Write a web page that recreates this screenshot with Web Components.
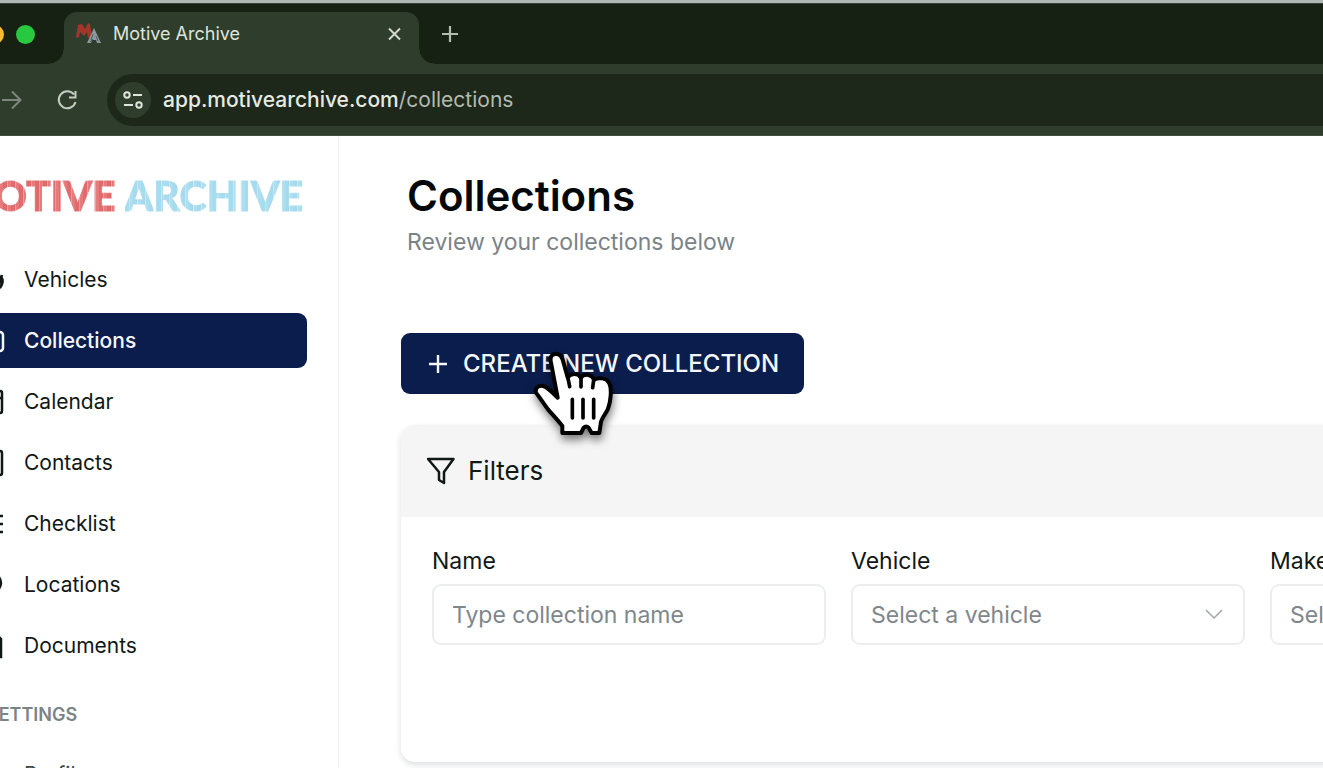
<!DOCTYPE html>
<html lang="en">
<head>
<meta charset="utf-8">
<title>Motive Archive</title>
<style>
html, body { margin: 0; height: 100%; }
body { overflow: hidden; font-family: Inter, "Liberation Sans", sans-serif; background: #fff; color: #101815; }
</style>
</head>
<body>
<motive-app></motive-app>
<script>
const define = (name, html, setup) => {
  const tpl = document.createElement('template');
  tpl.innerHTML = html;
  customElements.define(name, class extends HTMLElement {
    constructor() {
      super();
      this.attachShadow({ mode: 'open' }).append(tpl.content.cloneNode(true));
    }
    connectedCallback() { if (setup) setup(this, this.shadowRoot); }
  });
};

define('browser-chrome', `
<style>
:host { display: block; background: #2f3e2c; border-top: 3px solid #aeb7b2; border-bottom: 1px solid #414d3f; box-sizing: border-box; }
* { box-sizing: border-box; }
button { border: 0; background: none; padding: 0; display: flex; align-items: center; justify-content: center; color: #d3d9d0; }
.strip { display: flex; align-items: flex-end; height: 61px; background: #172113; border-top: 1px solid #3a4238; }
.lights { display: flex; gap: 12px; width: 140px; height: 52px; margin-left: -76px; padding: 13px 0 0 61px; flex: none; }
.lights i { width: 19px; height: 19px; border-radius: 50%; flex: none; background: #28c840; }
.lights i:first-child { background: #febc2e; }
.tab { position: relative; display: flex; align-items: center; width: 355px; height: 52px; padding: 0 14px 8px 12px; border-radius: 13px 13px 0 0; background: #2f3e2c; color: #dfe4dc; font-size: 18px; line-height: 24px; }
.tab::before, .tab::after { content: ""; position: absolute; bottom: 0; width: 15px; height: 15px; }
.tab::before { right: 100%; background: radial-gradient(circle at 0 0, #172113 14px, #2f3e2c 15px); }
.tab::after { left: 100%; background: radial-gradient(circle at 100% 0, #172113 14px, #2f3e2c 15px); }
.tab span { flex: 1; padding-left: 12px; }
.tab .close { width: 22px; height: 22px; }
.plus { width: 24px; height: 24px; margin: 0 0 18px 19px; color: #b4bbb1; }
.bar { display: flex; align-items: center; height: 71px; padding: 1px 0 0; }
.fwd { width: 24px; height: 24px; color: #7e877b; }
.reload { width: 24px; height: 24px; margin: 0 28px 0 31px; color: #c6ccc3; }
.url { flex: 1; display: flex; align-items: center; height: 52px; padding-left: 8px; border-radius: 26px 0 0 26px; background: #1d281a; }
.site { width: 36px; height: 36px; border-radius: 50%; background: #2f3e2c; flex: none; }
a { margin-left: 12px; font-size: 21px; line-height: 28px; color: #b4bab1; text-decoration: none; white-space: nowrap; }
b { font-weight: 500; color: #e6eae4; }
</style>
<div class="strip">
  <div class="lights"><i></i><i></i></div>
  <div class="tab">
    <svg width="25" height="24" viewBox="0 0 25 24" aria-hidden="true"><path d="M0 15 2 3l4-1 3 5 3-6 2 1 2 13-4 1-1-6-3 4-4-4-1 5-2 1z" fill="#a3352b"/><path d="M11 21 18 6l7 15h-4l-1-3h-4l-1 3z" fill="#8e959c"/><path d="m17 12-2 6M20 14l2 5M14 20l3-3" stroke="#4d5c63" fill="none"/></svg>
    <span>Motive Archive</span>
    <button class="close" aria-label="Close tab"><svg width="22" height="22" fill="none" stroke="currentColor" stroke-width="2"><path d="m6 5.500 11 11M17 5.500l-11 11"/></svg></button>
  </div>
  <button class="plus" aria-label="New tab"><svg width="24" height="24" fill="none" stroke="currentColor" stroke-width="2.200"><path d="M12 4v16M4 12h16"/></svg></button>
</div>
<div class="bar">
  <button class="fwd" aria-label="Forward"><svg width="24" height="24" fill="none" stroke="currentColor" stroke-width="2"><path d="M2 12h18M12 3.500l8.500 8.500-8.500 8.500"/></svg></button>
  <button class="reload" aria-label="Reload"><svg width="24" height="24" fill="none" stroke="currentColor" stroke-width="2"><path d="M20.500 14a8.500 8.500 0 1 1-1.500-7.500M20.500 3v6.500H14"/></svg></button>
  <div class="url">
    <button class="site" aria-label="Site information"><svg width="20" height="20" fill="none" stroke="#dfe4dc" stroke-width="2"><circle cx="4" cy="5" r="2.700"/><path d="M10 5h9M1 15h9"/><circle cx="16" cy="15" r="2.700"/></svg></button>
    <a href="#collections"><b>app.motivearchive.com</b>/collections</a>
  </div>
</div>`);

define('brand-logo', `
<style>
:host { display: flex; justify-content: flex-end; gap: 9px; font: 900 41px/48px Lato, sans-serif; }
span { color: transparent; -webkit-background-clip: text; background-clip: text; -webkit-text-stroke: 1px transparent; }
.m { background-image: repeating-linear-gradient(90deg, #e26a6c 0 4px, #ee9a9b 4px 5px, #e67b7d 5px 8px); }
.a { background-image: repeating-linear-gradient(90deg, #a5dbee 0 4px, #c6e8f4 4px 5px, #aedff0 5px 8px); }
</style>
<span class="m">MOTIVE</span><span class="a">ARCHIVE</span>`);

const icons = {
  car: '<path d="M3 12 6 5h10l3 6M2 12h17v8H2zM5 20v3M20 8c4 3 3 8 0 12M22 7l-4 14"/>',
  box: '<rect x="2" y="3" width="21" height="19" rx="3"/><path d="M8 3v19"/>',
  calendar: '<rect x="1" y="1" width="21" height="22" rx="2"/><path d="M1 8h21M7 0v4M17 0v4"/>',
  contact: '<rect x="1" y="0" width="21" height="24" rx="2"/><circle cx="12" cy="10" r="3"/><path d="M6 19h12"/>',
  list: '<path d="M13 4h10M13 12h10M13 20h10M1 4l3 3 5-6M1 16l3 3 5-6"/>',
  pin: '<path d="M21 10c0 6-9 14-9 14S3 16 3 10a9 9 0 0 1 18 0z"/>',
  file: '<path d="M3 3h16l2 2v18H3zM12 3v7h9"/>'
};

define('nav-item', `
<style>
:host { display: block; }
a { display: flex; align-items: center; gap: 20px; height: 55px; padding-left: 28px; border-radius: 9px; color: #101815; font-size: 21px; line-height: 28px; text-decoration: none; }
:host([active]) a { background: #0b1d4d; color: #f5f7fa; font-weight: 500; }
:host([muted]) a { color: #3f4845; }
svg { width: 24px; height: 24px; fill: none; stroke: currentColor; stroke-width: 2.500; flex: none; overflow: visible; }
</style>
<a href="#"><svg aria-hidden="true"></svg><slot></slot></a>`,
(el, root) => {
  root.querySelector('svg').innerHTML = icons[el.getAttribute('icon')] || '';
  if (el.hasAttribute('active')) root.querySelector('a').setAttribute('aria-current', 'page');
});

define('app-sidebar', `
<style>
:host { display: block; box-sizing: border-box; width: 387px; margin-left: -48px; padding: 36px 31px 0 0; border-right: 1px solid #f0f1f2; flex: none; }
brand-logo { margin-right: 4px; }
nav { display: flex; flex-direction: column; gap: 6px; margin-top: 32px; }
h2 { margin: 26px 0 16px 35px; font-size: 18px; line-height: 32px; font-weight: 600; color: #7b8386; }
</style>
<brand-logo></brand-logo>
<nav aria-label="Main">
  <nav-item icon="car">Vehicles</nav-item>
  <nav-item icon="box" active>Collections</nav-item>
  <nav-item icon="calendar">Calendar</nav-item>
  <nav-item icon="contact">Contacts</nav-item>
  <nav-item icon="list">Checklist</nav-item>
  <nav-item icon="pin">Locations</nav-item>
  <nav-item icon="file">Documents</nav-item>
</nav>
<h2>SETTINGS</h2>
<nav-item muted>Profile</nav-item>`);

define('create-button', `
<style>
:host { display: inline-block; position: relative; }
button { display: flex; align-items: center; gap: 14px; height: 61px; padding: 1px 25px 0 26px; border: 0; border-radius: 9px; background: #0b1d4d; color: #f4f6f8; font: 500 24px/32px Inter, sans-serif; white-space: nowrap; }
.hand { position: absolute; left: 119px; top: -3px; overflow: visible; filter: drop-shadow(1px 5px 4px rgba(0,0,0,.5)); pointer-events: none; }
</style>
<button><svg width="22" height="22" fill="none" stroke="currentColor" stroke-width="2.400" aria-hidden="true"><path d="M11 2v18M2 11h18"/></svg><slot></slot></button>
<svg class="hand" width="110" height="120" viewBox="0 0 330 360" aria-hidden="true">
  <path d="M113 203 93 98C89 82 95 73 105 72C117 70 124 76 128 89L143 142C152 130 174 128 182 143C194 130 216 132 222 149C237 141 260 143 268 160C276 178 272 216 264 236C258 252 242 266 242 282L238 309H215L206 293Q198 286 191 293L183 309H127V288C112 268 96 252 84 238C72 222 62 206 48 188C44 174 57 164 70 168C84 172 98 189 113 203Z" fill="#fff" stroke="#000" stroke-width="12" stroke-linejoin="round"/>
  <path d="M143 140 149 170M183 145V171M221 150 218 173M157 208V264M189 208V264M221 208V264" fill="none" stroke="#000" stroke-width="11" stroke-linecap="round"/>
</svg>`);

define('filter-field', `
<style>
:host { display: block; min-width: 0; }
label { display: block; font-size: 23px; line-height: 32px; margin-bottom: 7px; }
div { position: relative; }
input, select { appearance: none; display: block; box-sizing: border-box; width: 100%; height: 61px; margin: 0; padding: 1px 48px 0 18px; border: 2px solid #eceded; border-radius: 9px; background: #fff; color: #7f878b; font: 400 23px/32px Inter, sans-serif; }
input::placeholder { color: #7f878b; opacity: 1; }
svg { position: absolute; right: 20px; top: 19px; pointer-events: none; }
</style>
<label for="f"></label><div></div>`,
(el, root) => {
  root.querySelector('label').textContent = el.getAttribute('label');
  const hint = el.getAttribute('hint');
  root.querySelector('div').innerHTML = el.hasAttribute('options')
    ? `<select id="f"><option>${hint}</option></select><svg width="22" height="22" fill="none" stroke="#a0a7aa" stroke-width="1.500"><path d="m3 7 8 8 8-8"/></svg>`
    : `<input id="f" type="text" placeholder="${hint}">`;
});

define('filter-card', `
<style>
:host { display: block; border-radius: 14px; background: #fff; box-shadow: 0 3px 6px rgba(20,25,40,.14); overflow: hidden; }
header { display: flex; align-items: center; gap: 13px; height: 92px; box-sizing: border-box; padding: 0 26px; background: #f5f5f6; }
h2 { margin: 0; font-size: 26px; line-height: 32px; font-weight: 400; }
.fields { display: grid; grid-template-columns: repeat(3, 1fr); gap: 25px; padding: 28px 31px 117px; }
</style>
<header>
  <svg width="28" height="28" fill="none" stroke="#101815" stroke-width="2.500" stroke-linejoin="round" aria-hidden="true"><path d="M1 2h25.500L17 15V26l-5-3v-8z"/></svg>
  <h2>Filters</h2>
</header>
<div class="fields">
  <filter-field label="Name" hint="Type collection name"></filter-field>
  <filter-field label="Vehicle" hint="Select a vehicle" options></filter-field>
  <filter-field label="Make" hint="Select a make" options></filter-field>
</div>`);

define('collections-page', `
<style>
:host { display: block; flex: 1; min-width: 0; margin-right: -372px; padding: 32px 0 0 62px; }
h1 { margin: 0 6px; font-size: 42px; line-height: 56px; font-weight: 600; color: #05080b; }
p { margin: 2px 6px 0; font-size: 23px; line-height: 32px; color: #7b8386; }
create-button { margin: 75px 0 31px; vertical-align: top; }
</style>
<h1>Collections</h1>
<p>Review your collections below</p>
<create-button>CREATE NEW COLLECTION</create-button>
<filter-card></filter-card>`);

define('motive-app', `
<style>
:host { display: flex; flex-direction: column; height: 100vh; overflow: hidden; }
browser-chrome { flex: none; }
main { display: flex; flex: 1; min-height: 0; }
</style>
<browser-chrome></browser-chrome>
<main><app-sidebar></app-sidebar><collections-page></collections-page></main>`);
</script>
</body>
</html>
